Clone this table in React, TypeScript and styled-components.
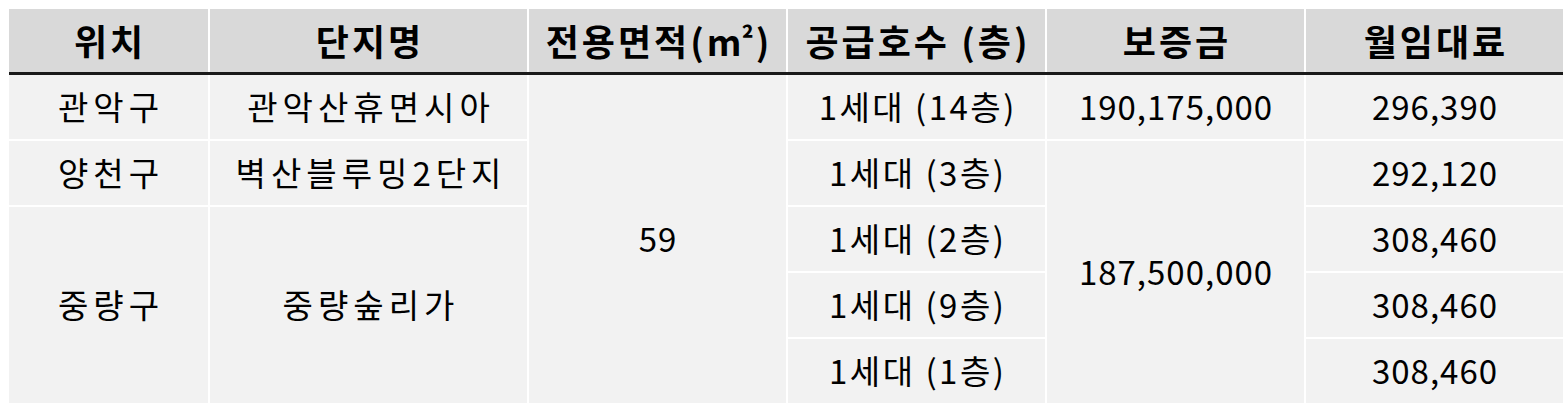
import React from 'react'
import styled, { createGlobalStyle } from 'styled-components'

const GlobalStyle = createGlobalStyle`
  html, body {
    margin: 0;
    padding: 0;
    background: #ffffff;
  }
  body {
    font-family: "Noto Sans CJK KR", "Noto Sans", sans-serif;
    color: #000000;
  }
`

const columns = '199px 317px 257px 257px 257px 257px'

const Page = styled.div`
  padding: 9px 0 0 9px;
  width: 1554px;
`

const HeaderRow = styled.div`
  display: grid;
  grid-template-columns: ${columns};
  column-gap: 2px;
  background: #ffffff;
`

const HeaderCell = styled.div`
  height: 63px;
  box-sizing: border-box;
  padding: 0 0 1px 3px;
  background: #d9d9d9;
  display: flex;
  align-items: center;
  justify-content: center;
  font-size: 36px;
  font-weight: 700;
  letter-spacing: 3px;
  line-height: 1;
`

const Rule = styled.div`
  height: 3px;
  background: #1a1a1a;
`

const Body = styled.div`
  display: grid;
  grid-template-columns: ${columns};
  grid-template-rows: repeat(5, 64px);
  gap: 2px;
  background: #ffffff;
`

const Cell = styled.div<{ $col: number; $row: number; $span?: number; $spacing: number }>`
  grid-column: ${p => p.$col};
  grid-row: ${p => `${p.$row} / span ${p.$span ?? 1}`};
  box-sizing: border-box;
  padding: 0 0 2px ${p => p.$spacing}px;
  background: #f2f2f2;
  display: flex;
  align-items: center;
  justify-content: center;
  font-size: 33px;
  font-weight: 400;
  letter-spacing: ${p => p.$spacing}px;
  line-height: 1;
`

const Unit = styled.span`
  letter-spacing: 0;
`

const Sup = styled.span`
  font-size: 0.8em;
  letter-spacing: 0;
  margin-right: 2px;
  position: relative;
  top: -2px;
`

interface CellData {
  col: number
  row: number
  span?: number
  text: string
}

const headers: React.ReactNode[] = [
  '위치',
  '단지명',
  <>
    전용면적(<Unit>m</Unit>
    <Sup>²</Sup>)
  </>,
  '공급호수 (층)',
  '보증금',
  '월임대료'
]

const cells: CellData[] = [
  { col: 1, row: 1, text: '관악구' },
  { col: 1, row: 2, text: '양천구' },
  { col: 1, row: 3, span: 3, text: '중량구' },
  { col: 2, row: 1, text: '관악산휴면시아' },
  { col: 2, row: 2, text: '벽산블루밍2단지' },
  { col: 2, row: 3, span: 3, text: '중량숲리가' },
  { col: 3, row: 1, span: 5, text: '59' },
  { col: 4, row: 1, text: '1세대 (14층)' },
  { col: 4, row: 2, text: '1세대 (3층)' },
  { col: 4, row: 3, text: '1세대 (2층)' },
  { col: 4, row: 4, text: '1세대 (9층)' },
  { col: 4, row: 5, text: '1세대 (1층)' },
  { col: 5, row: 1, text: '190,175,000' },
  { col: 5, row: 2, span: 4, text: '187,500,000' },
  { col: 6, row: 1, text: '296,390' },
  { col: 6, row: 2, text: '292,120' },
  { col: 6, row: 3, text: '308,460' },
  { col: 6, row: 4, text: '308,460' },
  { col: 6, row: 5, text: '308,460' }
]

// Malgun-like widths: hangul runs wider than digits
const spacingFor = (text: string) => {
  if (/^[\d,]+$/.test(text)) return 1
  if (/[\d(]/.test(text) && /층/.test(text)) return 2.5
  return 5
}

const App = () => (
  <>
    <GlobalStyle />
    <Page>
      <HeaderRow>
        {headers.map((h, i) => (
          <HeaderCell key={i}>{h}</HeaderCell>
        ))}
      </HeaderRow>
      <Rule />
      <Body>
        {cells.map((c, i) => (
          <Cell
            key={i}
            $col={c.col}
            $row={c.row}
            $span={c.span}
            $spacing={spacingFor(c.text)}
          >
            {c.text}
          </Cell>
        ))}
      </Body>
    </Page>
  </>
)

export default App
